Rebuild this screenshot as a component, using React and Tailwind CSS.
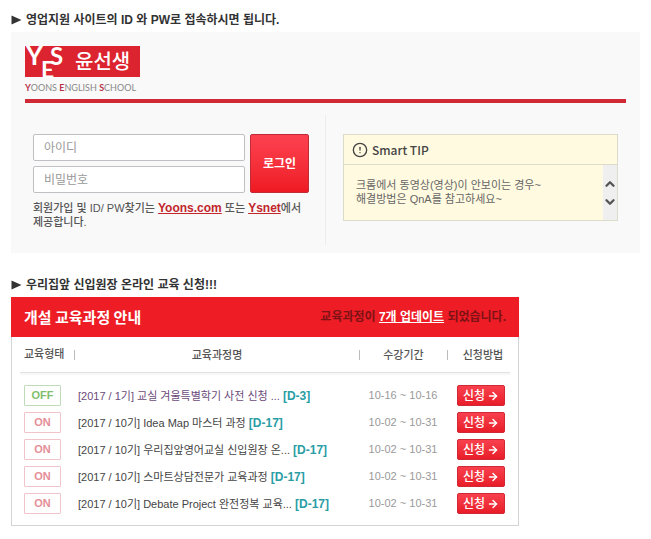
import { ArrowRight, ChevronDown, ChevronUp, CircleAlert } from "lucide-react";

const courses = [
  { id: 1, type: "OFF", title: "[2017 / 1기] 교실 겨울특별학기 사전 신청 ...", dday: "[D-3]", period: "10-16 ~ 10-16", visited: true },
  { id: 2, type: "ON", title: "[2017 / 10기] Idea Map 마스터 과정", dday: "[D-17]", period: "10-02 ~ 10-31" },
  { id: 3, type: "ON", title: "[2017 / 10기] 우리집앞영어교실 신입원장 온...", dday: "[D-17]", period: "10-02 ~ 10-31" },
  { id: 4, type: "ON", title: "[2017 / 10기] 스마트상담전문가 교육과정", dday: "[D-17]", period: "10-02 ~ 10-31" },
  { id: 5, type: "ON", title: "[2017 / 10기] Debate Project 완전정복 교육...", dday: "[D-17]", period: "10-02 ~ 10-31" },
];

function SectionTitle({ children }) {
  return (
    <h2 className="flex items-center gap-1 text-xs leading-4 font-bold text-[#333]">
      <svg viewBox="0 0 11 10" className="h-[10px] w-[11px] shrink-0" aria-hidden="true">
        <path d="M0.5 0.5 L10.5 5 L0.5 9.5 Z" fill="#333" />
      </svg>
      {children}
    </h2>
  );
}

function Logo() {
  return (
    <div>
      <svg viewBox="0 0 115 32" className="block h-8 w-[115px] overflow-visible" role="img" aria-label="YES 윤선생">
        <rect width="115" height="31" fill="#dc2430" />
        <g fill="#fff" fontFamily="Lato, sans-serif" fontWeight="700">
          <text x="1" y="19" fontSize="26">Y</text>
          <text x="25" y="19" fontSize="24">S</text>
          <text x="16" y="32" fontSize="23">E</text>
        </g>
        <text x="50" y="23" fill="#fff" fontSize="20" fontWeight="500" fontFamily="'Noto Sans CJK KR', sans-serif">
          윤선생
        </text>
      </svg>
      <p className="mt-1 font-['Lato',sans-serif] text-[9px] leading-3 whitespace-nowrap text-[#888]">
        <b className="text-[#b8324a]">Y</b>OONS <b className="text-[#b8324a]">E</b>NGLISH <b className="text-[#b8324a]">S</b>CHOOL
      </p>
    </div>
  );
}

function LoginForm() {
  const field =
    "h-[27px] w-full rounded-[2px] border border-[#bfc0c4] bg-white px-[10px] text-xs text-[#555] placeholder:text-[#999] outline-none";

  return (
    <form className="w-[276px] pt-[19px]" onSubmit={(e) => e.preventDefault()}>
      <div className="flex gap-[5px]">
        <div className="flex flex-1 flex-col gap-[5px]">
          <input type="text" aria-label="아이디" placeholder="아이디" className={field} />
          <input type="password" aria-label="비밀번호" placeholder="비밀번호" className={field} />
        </div>
        <button
          type="submit"
          className="w-[59px] rounded-[2px] border border-[#c02b38] bg-linear-to-b from-[#fd4150] to-[#ee1922] text-xs font-bold text-white"
        >
          로그인
        </button>
      </div>
      <p className="mt-2 text-[11px] leading-[14px] font-medium break-keep text-[#555]">
        회원가입 및 ID/ PW찾기는{" "}
        <a href="#yoons" className="text-xs leading-[14px] font-bold text-[#c1272d] underline">Yoons.com</a> 또는{" "}
        <a href="#ysnet" className="text-xs leading-[14px] font-bold text-[#c1272d] underline">Ysnet</a>에서 제공합니다.
      </p>
    </form>
  );
}

function SmartTip() {
  return (
    <section className="flex-1 border border-[#dcdac8] bg-[#fffae0]">
      <h3 className="flex h-[30px] items-center gap-1 border-b border-[#dcdac8] px-2 font-['Noto_Sans_CJK_KR',sans-serif] text-xs font-medium text-[#444]">
        <CircleAlert size={16} strokeWidth={2} />
        Smart TIP
      </h3>
      <div className="flex h-[55px]">
        <p className="flex-1 px-3 pt-[13px] text-[11px] leading-[14px] text-[#666]">
          크롬에서 동영상(영상)이 안보이는 경우~
          <br />
          해결방법은 QnA를 참고하세요~
        </p>
        <div className="flex w-[14px] flex-col items-center justify-center gap-1 bg-[#efefef] text-[#555]">
          <button type="button" aria-label="이전">
            <ChevronUp size={14} strokeWidth={4} />
          </button>
          <button type="button" aria-label="다음">
            <ChevronDown size={14} strokeWidth={4} />
          </button>
        </div>
      </div>
    </section>
  );
}

function CourseRow({ course }) {
  const badge =
    course.type === "OFF" ? "border-[#bfdcb8] text-[#7fbf6c]" : "border-[#f0c4ca] text-[#e58d98]";

  return (
    <tr className="h-[27px]">
      <td className="p-0 pl-3">
        <span
          className={`flex h-[21px] w-[37px] items-center justify-center rounded-[1px] border text-[11px] font-bold ${badge}`}
        >
          {course.type}
        </span>
      </td>
      <td className="p-0 pl-1 text-[11px] whitespace-nowrap">
        <a href="#course" className={course.visited ? "text-[#6b4a7a]" : "text-[#444]"}>
          {course.title}
        </a>{" "}
        <b className="text-xs text-[#2a9da5]">{course.dday}</b>
      </td>
      <td className="p-0 text-center text-[11px] whitespace-nowrap text-[#999]">{course.period}</td>
      <td className="p-0 pl-[10px]">
        <button
          type="button"
          className="flex h-[21px] w-12 items-center justify-center gap-[2px] rounded-[2px] border border-[#d02835] bg-linear-to-b from-[#f8404d] to-[#e81c28] text-xs font-medium text-white"
        >
          신청
          <ArrowRight size={12} strokeWidth={3} />
        </button>
      </td>
    </tr>
  );
}

function CourseTable() {
  const divider = "border-l border-[#bbb] leading-[10px]";

  return (
    <section className="mt-1 max-w-[508px] border border-t-0 border-[#d4d4d4] bg-white pb-2">
      <div className="-mx-px flex h-10 items-center justify-between bg-[#ee1c25] px-[13px]">
        <h3 className="font-['Noto_Sans_CJK_KR',sans-serif] text-[15px] font-bold text-white">개설 교육과정 안내</h3>
        <p className="text-xs font-bold text-[#7d1216]">
          교육과정이 <a href="#updates" className="text-white underline">7개 업데이트</a> 되었습니다.
        </p>
      </div>
      <table className="w-full table-fixed border-collapse text-left text-xs">
        <colgroup>
          <col className="w-[62px]" />
          <col />
          <col className="w-[88px]" />
          <col className="w-[71px]" />
        </colgroup>
        <thead>
          <tr className="h-[35px] text-[11px] text-[#555]">
            <th className="p-0 pl-3 font-medium">교육형태</th>
            <th className="p-0 text-center font-medium">
              <div className={divider}>교육과정명</div>
            </th>
            <th className="p-0 text-center font-medium">
              <div className={divider}>수강기간</div>
            </th>
            <th className="p-0 text-center font-medium">
              <div className={divider}>신청방법</div>
            </th>
          </tr>
        </thead>
        <tbody>
          <tr aria-hidden="true">
            <td colSpan={4} className="h-[10px] p-0 px-2 align-top">
              <div className="h-1 border-t border-[#e2e2e2] bg-linear-to-b from-[#f4f4f4] to-white" />
            </td>
          </tr>
          {courses.map((course) => (
            <CourseRow key={course.id} course={course} />
          ))}
        </tbody>
      </table>
    </section>
  );
}

export default function App() {
  return (
    <main className="bg-white px-[11px] pt-3 pb-3 font-['Liberation_Sans','Noto_Sans_CJK_KR',sans-serif]">
      <SectionTitle>영업지원 사이트의 ID 와 PW로 접속하시면 됩니다.</SectionTitle>

      <section className="mt-1 bg-[#f9f9f9] px-[14px] pt-[14px] pb-2">
        <Logo />
        <hr className="mt-[5px] border-0 border-t-4 border-[#cf2a35]" />
        <div className="mt-3 flex pl-2">
          <LoginForm />
          <div className="ml-4 flex flex-1 border-l border-[#ececec] pt-[19px] pr-2 pb-6 pl-[17px]">
            <SmartTip />
          </div>
        </div>
      </section>

      <div className="mt-6">
        <SectionTitle>우리집앞 신입원장 온라인 교육 신청!!!</SectionTitle>
        <CourseTable />
      </div>
    </main>
  );
}
